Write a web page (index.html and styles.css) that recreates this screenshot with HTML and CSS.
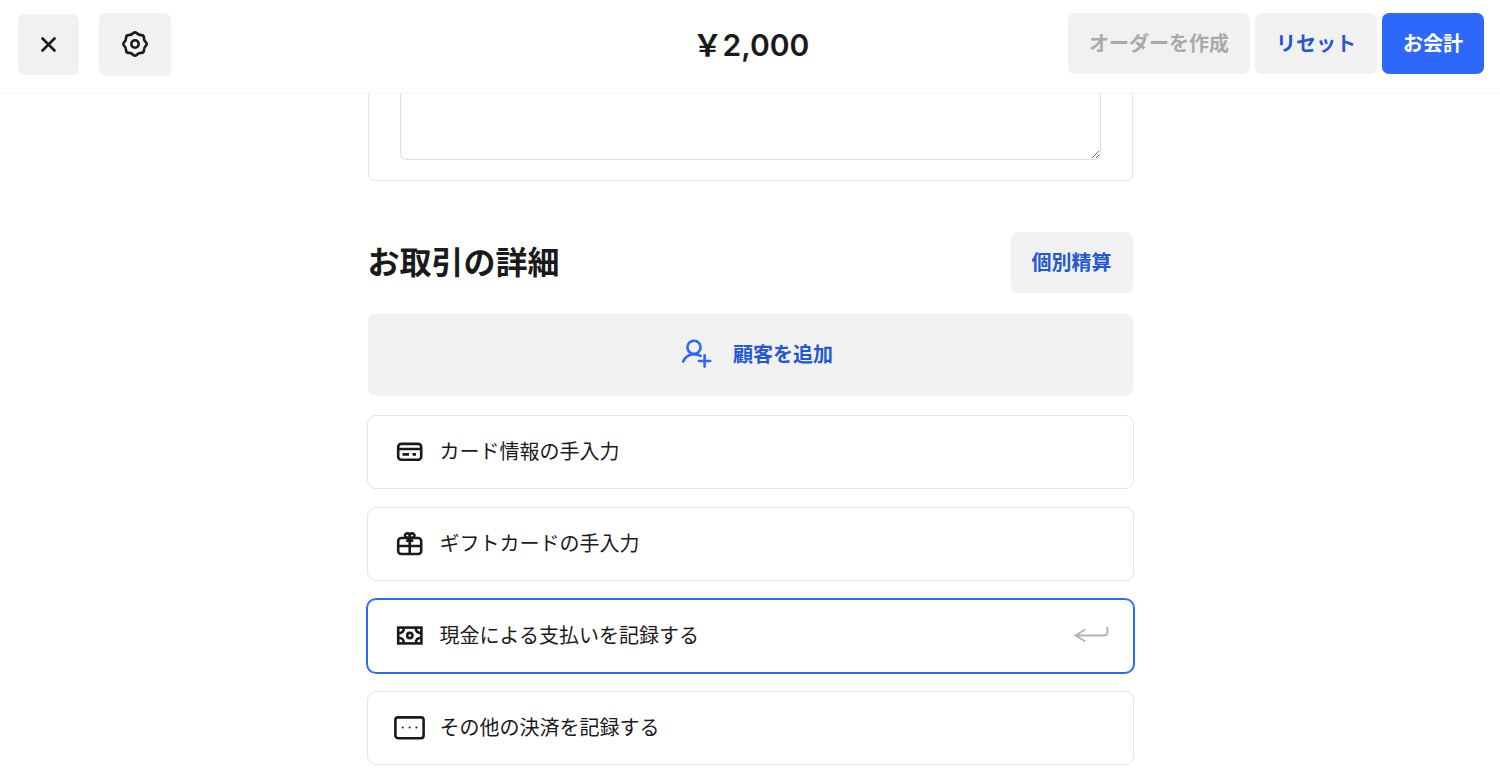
FILE: index.html
```html
<!DOCTYPE html>
<html lang="ja">

<head>
    <meta charset="UTF-8">
    <meta name="viewport" content="width=device-width, initial-scale=1.0">
    <title>お会計</title>
    <link rel="stylesheet" href="styles.css">
</head>

<body>

    <header class="topbar">
        <div class="topbar-left">
            <button type="button" class="btn btn-close" aria-label="閉じる">
                <svg width="16" height="16" viewBox="0 0 16 16">
                    <path d="M1.5 1.5L13.5 13.5M13.5 1.5L1.5 13.5" />
                </svg>
            </button>
            <button type="button" class="btn btn-settings" aria-label="設定">
                <svg width="28" height="28" viewBox="-14 -14 28 28">
                    <path d="M1.85 -10.75Q3.7 -8.9 6.3 -8.9Q8.9 -8.9 8.9 -6.3Q8.9 -3.7 10.75 -1.85Q12.6 0 10.75 1.85Q8.9 3.7 8.9 6.3Q8.9 8.9 6.3 8.9Q3.7 8.9 1.85 10.75Q0 12.6 -1.85 10.75Q-3.7 8.9 -6.3 8.9Q-8.9 8.9 -8.9 6.3Q-8.9 3.7 -10.75 1.85Q-12.6 0 -10.75 -1.85Q-8.9 -3.7 -8.9 -6.3Q-8.9 -8.9 -6.3 -8.9Q-3.7 -8.9 -1.85 -10.75Q0 -12.6 1.85 -10.75Z" />
                    <circle r="3.7" />
                </svg>
            </button>
        </div>
        <h1 class="amount">￥2,000</h1>
        <div class="topbar-right">
            <button type="button" class="btn" disabled>オーダーを作成</button>
            <button type="button" class="btn">リセット</button>
            <button type="button" class="btn btn-primary">お会計</button>
        </div>
    </header>

    <main class="checkout">
        <!-- Note -->
        <div class="note-panel">
            <textarea class="note" aria-label="メモ"></textarea>
        </div>

        <!-- Transaction details -->
        <div class="section-head">
            <h2>お取引の詳細</h2>
            <button type="button" class="btn">個別精算</button>
        </div>

        <button type="button" class="btn btn-customer">
            <svg width="32" height="32" viewBox="0 0 32 32">
                <circle cx="13" cy="9.3" r="6.6" />
                <path d="M2.2 23.5C4 19.3 7.2 16.2 13 16.2C15.6 16.2 17.8 16.8 19.6 17.9M23.6 17.4V28.6M18 23H29.2" />
            </svg>
            顧客を追加
        </button>

        <!-- Payment methods -->
        <div class="methods">
            <button type="button" class="method">
                <svg width="32" height="32" viewBox="0 0 32 32">
                    <rect x="4.2" y="7.9" width="23" height="15.8" rx="3" />
                    <path d="M4.2 13H27.2M8.5 18.4H15M18.5 18.4H22" />
                </svg>
                <span class="label">カード情報の手入力</span>
            </button>
            <button type="button" class="method">
                <svg width="32" height="32" viewBox="0 0 32 32">
                    <rect x="4.2" y="10" width="23" height="16" rx="3" />
                    <path d="M4.2 18H27.2M15.7 10V26M15.7 10.5V8C15.7 4.6 10.9 4.6 10.9 7.6C10.9 9.4 12.4 10 15.7 10.2M15.7 10.5V8C15.7 4.6 20.5 4.6 20.5 7.6C20.5 9.4 19 10 15.7 10.2L12.5 13.6M15.7 10.2L18.9 13.6" />
                </svg>
                <span class="label">ギフトカードの手入力</span>
            </button>
            <button type="button" class="method selected">
                <svg width="32" height="32" viewBox="0 0 32 32">
                    <rect x="4.2" y="7.6" width="23.2" height="15.8" />
                    <path d="M4.2 13.2C8 13.2 9.9 11.4 9.9 7.6M4.2 17.8C8 17.8 9.9 19.6 9.9 23.4M27.4 13.2C23.6 13.2 21.7 11.4 21.7 7.6M27.4 17.8C23.6 17.8 21.7 19.6 21.7 23.4" />
                    <circle cx="15.8" cy="15.5" r="2.6" />
                </svg>
                <span class="label">現金による支払いを記録する</span>
                <svg class="enter" width="36" height="20" viewBox="0 0 36 20">
                    <path d="M34.4 1.5V6Q34.4 9.5 30.9 9.5H2.5M11.5 4L2.5 9.5L11.5 15" />
                </svg>
            </button>
            <button type="button" class="method">
                <svg width="32" height="32" viewBox="0 0 32 32">
                    <rect x="1.4" y="5.4" width="28.2" height="20.8" rx="2.6" />
                    <path class="dots" d="M8.7 15.5H8.71M15.6 15.5H15.61M22.4 15.5H22.41" />
                </svg>
                <span class="label">その他の決済を記録する</span>
            </button>
        </div>
    </main>

</body>

</html>
```
FILE: styles.css
```css
* {
    box-sizing: border-box;
}

body {
    margin: 0;
    background-color: #fff;
    color: #1a1a1a;
    font-family: Inter, "Noto Sans CJK JP", sans-serif;
    font-size: 20px;
}

h1,
h2 {
    margin: 0;
}

svg {
    flex-shrink: 0;
    fill: none;
    stroke: currentColor;
    stroke-width: 2.6;
}

/* Buttons */
.btn {
    display: flex;
    align-items: center;
    justify-content: center;
    height: 61px;
    padding: 0 21px 3px;
    border: none;
    border-radius: 7px;
    background-color: #f1f1f1;
    color: #2457d6;
    font-family: inherit;
    font-size: 20px;
    font-weight: 700;
    white-space: nowrap;
    cursor: pointer;
}

.btn:disabled {
    color: #aaa;
    cursor: default;
}

.btn svg {
    stroke-linecap: round;
}

.btn-primary {
    background-color: #2e68fa;
    color: #fff;
}

.btn-close {
    width: 61px;
    padding: 0;
    color: #1a1a1a;
}

.btn-settings {
    width: 72px;
    height: 63px;
    padding: 0 0 2px;
    color: #1a1a1a;
}

/* Top bar */
.topbar {
    display: grid;
    grid-template-columns: 1fr auto 1fr;
    align-items: center;
    padding: 13px 16px 17px 18px;
    border-bottom: 1px solid #f4f4f4;
}

.topbar-left {
    display: flex;
    align-items: center;
    gap: 20px;
}

.topbar-right {
    display: flex;
    align-self: start;
    justify-content: flex-end;
    gap: 5px;
}

.amount {
    font-size: 30px;
    font-weight: 600;
    line-height: 40px;
}

/* Checkout */
.checkout {
    max-width: 767px;
    margin: 0 auto;
}

.note-panel {
    margin: 0 1px;
    padding: 0 31px 20px;
    border: 1px solid #e4e4e4;
    border-top: none;
    border-radius: 0 0 7px 7px;
}

.note {
    display: block;
    width: 100%;
    height: 66px;
    border: 1px solid #dedede;
    border-top: none;
    border-radius: 0 0 7px 7px;
    font: inherit;
    resize: vertical;
}

.section-head {
    display: flex;
    align-items: center;
    justify-content: space-between;
    margin: 51px 1px 21px;
}

.section-head h2 {
    font-size: 32px;
    font-weight: 700;
    line-height: 48px;
}

.btn-customer {
    gap: 20px;
    width: calc(100% - 2px);
    height: 82px;
    margin: 0 1px;
    padding-left: 35px;
}

.btn-customer svg {
    color: #2e68fa;
}

.methods {
    display: flex;
    flex-direction: column;
    gap: 18px;
    margin: 19px 0;
}

.method {
    display: flex;
    align-items: center;
    gap: 14px;
    height: 74px;
    padding: 0 24px 0 26px;
    border: 1px solid #e4e4e4;
    border-radius: 9px;
    background-color: #fff;
    color: #1a1a1a;
    font-family: inherit;
    font-size: 20px;
    font-weight: 400;
    text-align: left;
    cursor: pointer;
}

.method.selected {
    border-color: #2e68fa;
    box-shadow: 0 0 0 1px #2e68fa;
}

.label {
    padding-bottom: 3px;
}

.method .enter {
    margin-left: auto;
    color: #b4b4b4;
    stroke-width: 2;
    stroke-linecap: round;
}

.dots {
    stroke-width: 2;
    stroke-linecap: round;
}
```
